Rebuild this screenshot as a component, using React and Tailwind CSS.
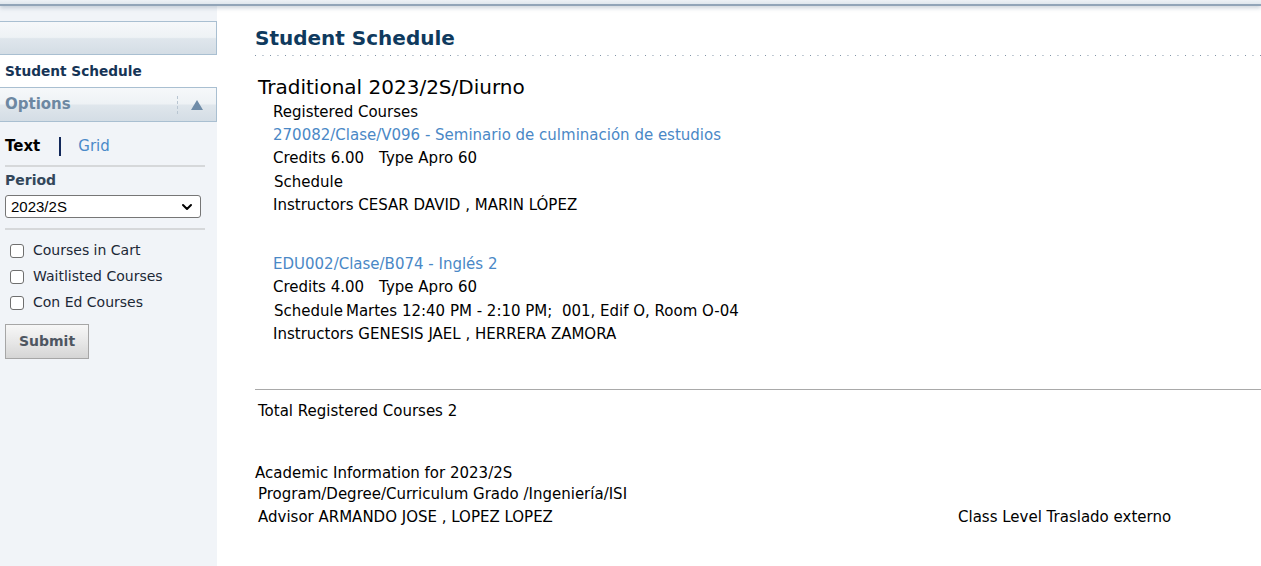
import React from 'react'
import { ChevronDown } from 'lucide-react'

const courses = [
    {
        title: '270082/Clase/V096 - Seminario de culminación de estudios',
        credits: '6.00',
        type: 'Apro 60',
        schedule: '',
        instructors: 'CESAR DAVID , MARIN LÓPEZ',
    },
    {
        title: 'EDU002/Clase/B074 - Inglés 2',
        credits: '4.00',
        type: 'Apro 60',
        schedule: 'Martes 12:40 PM - 2:10 PM;  001, Edif O, Room O-04',
        instructors: 'GENESIS JAEL , HERRERA ZAMORA',
    },
]

const glossy = 'bg-[linear-gradient(#f6f8fa,#eef2f5_48%,#dfe6ec_52%,#d4dde5)]'

function Sidebar() {
    return (
        <aside className="w-[217px] shrink-0 bg-[#f1f4f8] pt-[15px] min-h-[560px]">
            <div className={`h-[34px] border border-l-0 border-[#a9bfd1] ${glossy}`} />
            <div className="h-[32px] bg-white flex items-center pl-[5px] text-[13.7px] font-bold text-[#163456]">
                Student Schedule
            </div>
            <div className={`h-[35px] border border-l-0 border-[#a9bfd1] ${glossy} flex items-center pl-[5px] pr-[13px]`}>
                <span className="text-[15px] font-bold text-[#6d88a2]">Options</span>
                <span className="ml-auto h-[18px] border-l border-dashed border-[#b9c6d2]" />
                <svg width="12" height="10" viewBox="0 0 12 10" className="ml-[13px]">
                    <polygon points="6,0 12,10 0,10" fill="#6f8ca8" />
                </svg>
            </div>

            <div className="px-[5px] pr-[12px]">
                <div className="flex items-center h-[43px] pt-[6px] text-[15px]">
                    <span className="font-bold text-black">Text</span>
                    <span className="ml-[19px] mr-[17px] w-[2px] h-[19px] bg-[#12285a]" />
                    <span className="text-[#4b8ac9]">Grid</span>
                </div>
                <div className="h-[2px] bg-[#d6d8da]" />
                <div className="pt-[3px] text-[14px] font-bold text-[#33475b]">Period</div>
                <div className="relative mt-[4px] mr-[4px]">
                    <select className="appearance-none w-full h-[23px] border border-[#767676] rounded-[3px] bg-white pl-[5px] text-[15px] text-black font-['Liberation_Sans',Arial,sans-serif]">
                        <option>2023/2S</option>
                    </select>
                    <ChevronDown size={16} strokeWidth={3} className="absolute right-[6px] top-[4px] text-black pointer-events-none" />
                </div>
                <div className="h-[2px] bg-[#d6d8da] mt-[9px]" />
                <div className="pt-[11px] flex flex-col gap-[7px] text-[14px] text-[#1c2836]">
                    {['Courses in Cart', 'Waitlisted Courses', 'Con Ed Courses'].map((l) => (
                        <label key={l} className="flex items-center h-[19px] gap-[9px] pl-[5px]">
                            <input
                                type="checkbox"
                                className="appearance-none w-[14px] h-[14px] m-0 border border-[#6f6f6f] rounded-[3px] bg-white"
                            />
                            <span>{l}</span>
                        </label>
                    ))}
                </div>
                <button className="mt-[12px] w-[84px] h-[35px] border border-[#a6a6a6] bg-[linear-gradient(#f7f7f7,#e6e6e6_55%,#d5d5d5)] text-[14px] font-bold text-[#4e5661]">
                    Submit
                </button>
            </div>
        </aside>
    )
}

function Course({ c }) {
    return (
        <div className="pl-[18px]">
            <div className="h-[23px] flex items-center text-[#4a88c6]">{c.title}</div>
            <div className="h-[23px] flex items-center">Credits {c.credits}<span className="ml-[15px]">Type {c.type}</span></div>
            <div className="h-[24px] flex items-center pl-[1px]">Schedule<span className="ml-[3px] whitespace-pre">{c.schedule}</span></div>
            <div className="h-[23px] flex items-center">Instructors {c.instructors}</div>
        </div>
    )
}

export default function App() {
    return (
        <div className="min-h-[566px] bg-white font-['DejaVu_Sans',Verdana,sans-serif] text-black overflow-hidden">
            <div className="relative z-10 h-[6px] bg-[linear-gradient(#eef2f6,#e1e8ee_60%,#92a5b8_66%,#92a5b8)] shadow-[0_2px_4px_rgba(110,130,150,0.35)]" />
            <div className="flex">
                <Sidebar />
                <main className="flex-1 pl-[38px] text-[15px]">
                    <h1 className="pt-[18px] h-[49px] text-[20px] font-bold text-[#0f3a5e] leading-[28px]">Student Schedule</h1>
                    <div className="h-[1px] bg-[linear-gradient(to_right,#7c90a4_1px,transparent_1px)] bg-[length:7.5px_1px]" />
                    <div className="pt-[18px] pl-[3px] text-[20px] leading-[27px]">Traditional 2023/2S/Diurno</div>
                    <div className="pl-[18px] h-[23px] flex items-center">Registered Courses</div>
                    <Course c={courses[0]} />
                    <div className="h-[36px]" />
                    <Course c={courses[1]} />
                    <div className="h-[43px]" />
                    <div className="h-[1px] bg-[#a9a9a9]" />
                    <div className="pl-[3px] pt-[10px] h-[33px]">Total Registered Courses 2</div>
                    <div className="h-[40px]" />
                    <div className="h-[20px] flex items-center">Academic Information for 2023/2S</div>
                    <div className="h-[22px] flex items-center pl-[3px]">Program/Degree/Curriculum Grado /Ingeniería/ISI</div>
                    <div className="h-[24px] flex items-center pl-[3px]">
                        <span className="w-[700px]">Advisor ARMANDO JOSE , LOPEZ LOPEZ</span>
                        <span>Class Level Traslado externo</span>
                    </div>
                </main>
            </div>
        </div>
    )
}
